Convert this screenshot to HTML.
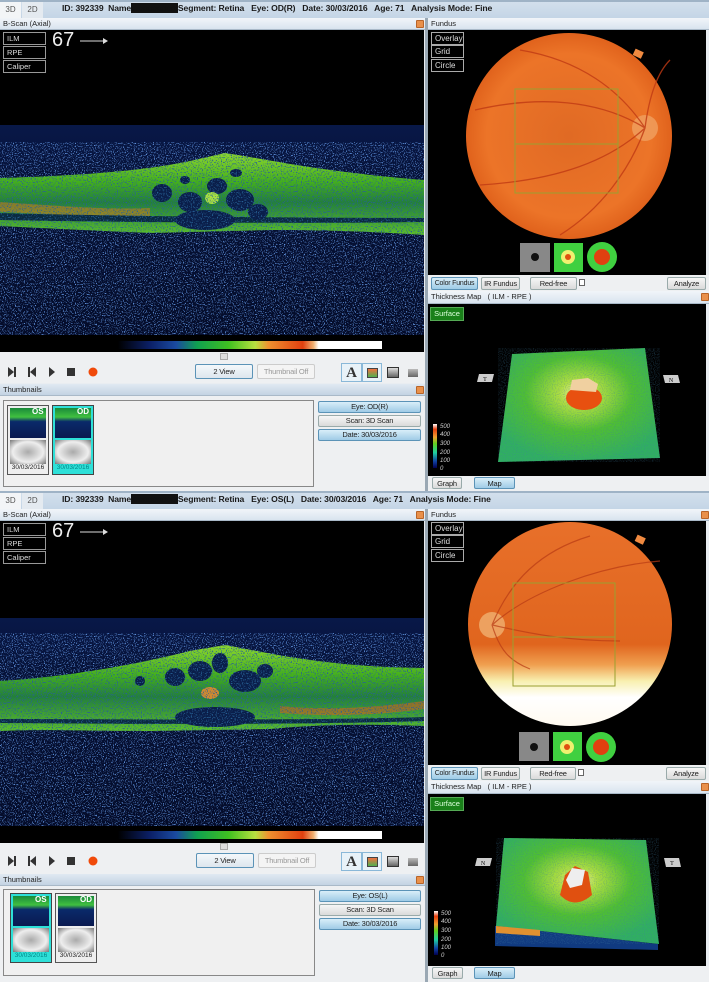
<!DOCTYPE html>
<html><head><meta charset="utf-8">
<style>
*{margin:0;padding:0;box-sizing:border-box}
body{width:709px;height:982px;overflow:hidden;background:#fff;font-family:"Liberation Sans",sans-serif;position:relative}
.half{position:absolute;left:0;width:709px;height:491px;background:#e9edf1;overflow:hidden}
.a{position:absolute}
.topbar{left:0;top:0;width:709px;height:18px;background:linear-gradient(#d2dfec,#c4d5e6);border-top:2px solid #9fb3c6}
.tab{top:2px;height:16px;width:21px;font-size:8px;color:#555;text-align:center;line-height:16px;background:#f3f5f7}
.info{left:62px;top:3px;font-size:8.6px;font-weight:bold;color:#1a1a1a;letter-spacing:-0.1px;white-space:nowrap}
.ph{height:12px;background:linear-gradient(#f1f5f9,#d9e4ef);font-size:7.5px;color:#222;line-height:12px;padding-left:3px;border-bottom:1px solid #a9b9c8;white-space:nowrap}
.orb{width:8px;height:8px;background:#e9904a;border:1px solid #b86428;border-radius:1px}
.lb{left:3px;width:43px;height:13px;border:1px solid #999;color:#ddd;font-size:7.5px;line-height:11px;padding-left:3px}
.rb{left:431px;width:33px;height:13px;border:1px solid #aaa;color:#ddd;font-size:8px;line-height:11px;padding-left:3px}
.btn{height:13px;border:1px solid #9aa;background:linear-gradient(#f6f6f6,#dadada);font-size:7.5px;text-align:center;line-height:11px;color:#222;border-radius:2px;white-space:nowrap;overflow:hidden;letter-spacing:-0.2px}
.btnb{background:linear-gradient(#d9eef9,#9fcbe6);border-color:#5b93b7}
.tb{background:#eef0f2}
</style></head><body>

<svg width="0" height="0" style="position:absolute">
<defs>
<filter id="spk" x="0" y="0" width="100%" height="100%"><feTurbulence type="fractalNoise" baseFrequency="0.9" numOctaves="1" seed="3"/><feColorMatrix type="matrix" values="0 0 0 0 0.12  0 0 0 0 0.3  0 0 0 0 0.75  0 0 0 7 -3.9"/></filter>
<filter id="spd" x="0" y="0" width="100%" height="100%"><feTurbulence type="fractalNoise" baseFrequency="0.8" numOctaves="1" seed="11"/><feColorMatrix type="matrix" values="0 0 0 0 0.02  0 0 0 0 0.12  0 0 0 0 0.3  0 0 0 6 -3.2"/></filter>
<filter id="spg" x="0" y="0" width="100%" height="100%"><feTurbulence type="fractalNoise" baseFrequency="0.9" numOctaves="1" seed="7"/><feColorMatrix type="matrix" values="0 0 0 0 0.05  0 0 0 0 0.2  0 0 0 0 0.35  0 0 0 4 -1.8"/></filter>
<linearGradient id="cbar" x1="0" x2="1"><stop offset="0" stop-color="#000"/><stop offset="0.12" stop-color="#0b1f66"/><stop offset="0.22" stop-color="#1a4aa0"/><stop offset="0.3" stop-color="#10a050"/><stop offset="0.42" stop-color="#40c020"/><stop offset="0.52" stop-color="#b8e040"/><stop offset="0.57" stop-color="#f09030"/><stop offset="0.7" stop-color="#e04010"/><stop offset="0.74" stop-color="#f0b070"/><stop offset="0.76" stop-color="#fff"/><stop offset="1" stop-color="#fff"/></linearGradient>
<linearGradient id="bg1" x1="0" y1="0" x2="0" y2="1"><stop offset="0" stop-color="#081848"/><stop offset="0.25" stop-color="#061238"/><stop offset="1" stop-color="#040c2a"/></linearGradient>
<linearGradient id="ret" x1="0" y1="0" x2="0" y2="1"><stop offset="0" stop-color="#8ed82c"/><stop offset="0.35" stop-color="#44b01c"/><stop offset="0.6" stop-color="#23803a"/><stop offset="1" stop-color="#5cc02a"/></linearGradient>
<radialGradient id="fund" cx="0.5" cy="0.5" r="0.5"><stop offset="0" stop-color="#e06a24"/><stop offset="0.8" stop-color="#ec7428"/><stop offset="1" stop-color="#e0621c"/></radialGradient>
<linearGradient id="fund2" x1="0" y1="0" x2="0" y2="1"><stop offset="0" stop-color="#e8702a"/><stop offset="0.6" stop-color="#e0651e"/><stop offset="0.7" stop-color="#f0a050"/><stop offset="0.78" stop-color="#f8f0b0"/><stop offset="0.86" stop-color="#fff"/><stop offset="1" stop-color="#fffaf0"/></linearGradient>
<linearGradient id="leg" x1="0" y1="0" x2="0" y2="1"><stop offset="0" stop-color="#fff"/><stop offset="0.12" stop-color="#e84010"/><stop offset="0.3" stop-color="#f0a030"/><stop offset="0.45" stop-color="#60d020"/><stop offset="0.65" stop-color="#20d0a0"/><stop offset="0.85" stop-color="#1040a0"/><stop offset="1" stop-color="#000050"/></linearGradient>
<radialGradient id="surf1" cx="0.5" cy="0.4" r="0.6"><stop offset="0" stop-color="#f0f0a0"/><stop offset="0.2" stop-color="#b0e040"/><stop offset="0.55" stop-color="#50c030"/><stop offset="1" stop-color="#30b060"/></radialGradient>
<clipPath id="cr1"><path d="M0,148 C80,146 150,140 190,131 L225,123 C260,128 320,142 424,150 L424,205 C350,200 300,200 270,200 L150,203 C80,200 40,198 0,196Z"/></clipPath>
<clipPath id="cr2"><path d="M0,160 C80,155 150,140 190,130 L225,124 C260,130 320,146 424,147 L424,205 C350,202 300,205 270,208 L150,210 C80,210 40,208 0,210Z"/></clipPath>
</defs></svg>

<!-- ================= HALF 1 ================= -->
<div class="half" style="top:0">
 <div class="a topbar"></div>
 <div class="a tab" style="left:0">3D</div><div class="a tab" style="left:22px;background:#e4eaf0">2D</div>
 <div class="a info">ID: 392339&nbsp; Name<span style="background:#111;color:#111">xxxxxxxxxx</span>Segment: Retina&nbsp;&nbsp; Eye: OD(R)&nbsp;&nbsp; Date: 30/03/2016&nbsp;&nbsp; Age: 71&nbsp;&nbsp; Analysis Mode: Fine</div>
 <div class="a ph" style="left:0;top:18px;width:425px">B-Scan (Axial)</div><div class="a orb" style="left:416px;top:20px"></div>
 <div class="a ph" style="left:428px;top:18px;width:281px">Fundus</div>
 <div class="a" style="left:425px;top:18px;width:3px;height:473px;background:#9aa8b4"></div>
 <svg class="a" style="left:0;top:30px" width="424" height="322" viewBox="0 0 424 322">
  <rect width="424" height="322" fill="#000"/>
  <rect y="95" width="424" height="210" fill="url(#bg1)"/>
  <rect y="112" width="424" height="193" filter="url(#spk)"/>
  <path d="M0,148 C80,146 150,140 190,131 L225,123 C260,128 320,142 424,150 L424,205 C350,200 300,200 270,200 L150,203 C80,200 40,198 0,196Z" fill="url(#ret)"/>
  <path d="M0,172 C60,176 110,180 150,178 L150,186 C100,188 50,184 0,182Z" fill="#c87a20" opacity="0.6"/>
  <path d="M0,183 C100,186 300,188 424,188 L424,192 C300,194 100,192 0,190Z" fill="#0a2a40"/>
  <g fill="#0a1e4a"><ellipse cx="162" cy="163" rx="10" ry="9"/><ellipse cx="190" cy="172" rx="12" ry="10"/><ellipse cx="217" cy="156" rx="10" ry="8"/><ellipse cx="240" cy="170" rx="14" ry="11"/><ellipse cx="258" cy="182" rx="10" ry="8"/><ellipse cx="205" cy="190" rx="30" ry="10"/><ellipse cx="236" cy="143" rx="6" ry="4"/><ellipse cx="185" cy="150" rx="5" ry="4"/></g>
  <ellipse cx="212" cy="168" rx="7" ry="6" fill="#a8e040"/>
  <rect y="110" width="424" height="110" filter="url(#spd)" clip-path="url(#cr1)"/>
  <rect x="118" y="311" width="264" height="8" fill="url(#cbar)"/>
 </svg>
 <div class="a lb" style="top:32px">ILM</div><div class="a lb" style="top:46px">RPE</div><div class="a lb" style="top:60px">Caliper</div>
 <div class="a" style="left:52px;top:29px;color:#eee;font-size:20px">67</div>
 <svg class="a" style="left:80px;top:37px" width="30" height="8"><line x1="0" y1="4" x2="24" y2="4" stroke="#ddd"/><path d="M23,1 L28,4 L23,7Z" fill="#ddd"/></svg>
 <div class="a tb" style="left:0;top:352px;width:425px;height:31px"></div>
 <div class="a" style="left:220px;top:353px;width:8px;height:7px;background:#ddd;border:1px solid #aaa"></div>
 <svg class="a" style="left:0;top:364px" width="110" height="16"><g fill="#333"><path d="M8,3 L14,8 L8,13Z"/><rect x="14" y="3" width="2" height="10"/><rect x="28" y="3" width="2" height="10"/><path d="M36,3 L30,8 L36,13Z"/><path d="M49,3 L55,8 L49,13Z"/><rect x="67" y="4" width="8" height="8"/></g><circle cx="93" cy="8" r="4.5" fill="#f04a0a"/></svg>
 <div class="a btn btnb" style="left:195px;top:364px;width:58px;height:15px;line-height:13px;background:linear-gradient(#f4f8fb,#dde6ee)">2 View</div>
 <div class="a btn" style="left:257px;top:364px;width:58px;height:15px;line-height:13px;color:#999;background:#f4f4f4;border-color:#ccc">Thumbnail Off</div>
 <div class="a" style="left:341px;top:363px;width:21px;height:19px;border:1px solid #8ab8d8;background:#e8f2f8;font-family:'Liberation Serif',serif;font-weight:bold;font-size:15px;text-align:center;line-height:18px;color:#333">A</div>
 <div class="a" style="left:362px;top:363px;width:20px;height:19px;border:1px solid #8ab8d8;background:#e8f2f8"><div style="margin:4px 4px;width:11px;height:10px;background:linear-gradient(#f07040,#50b050);border:1px solid #444"></div></div>
 <div class="a" style="left:387px;top:367px;width:12px;height:11px;background:linear-gradient(#ddd,#666);border:1.5px solid #333"></div>
 <div class="a" style="left:408px;top:369px;width:10px;height:8px;background:linear-gradient(#bbb,#666)"></div>
 <div class="a ph" style="left:0;top:384px;width:425px;height:12px;background:linear-gradient(#e0e9f2,#c3d3e3)">Thumbnails</div><div class="a orb" style="left:416px;top:386px"></div>
 <div class="a" style="left:0;top:396px;width:425px;height:95px;background:#eef0f2"></div>
 <div class="a" style="left:3px;top:400px;width:311px;height:87px;border:1px solid #888;background:#f0f0f0"></div>
 <div class="a" style="left:7px;top:405px;width:42px;height:70px;border:1px solid #555;background:#eee">
  <div style="margin:2px;height:30px;background:linear-gradient(#1a8a3a 0,#40c040 30%,#0a2a6a 45%,#0a1a50)"></div>
  <div style="margin:0 2px;height:24px;background:radial-gradient(#aaa,#eee 60%,#777)"></div>
  <div style="font-size:6.5px;text-align:center;color:#222">30/03/2016</div>
  <div class="a" style="left:24px;top:1px;color:#fff;font-size:8px;font-weight:bold">OS</div></div>
 <div class="a" style="left:52px;top:405px;width:42px;height:70px;border:1px solid #444;background:#2ee0d8">
  <div style="margin:2px;height:30px;background:linear-gradient(#1a8a3a 0,#40c040 30%,#0a2a6a 45%,#0a1a50)"></div>
  <div style="margin:0 2px;height:24px;background:radial-gradient(#aaa,#eee 60%,#777)"></div>
  <div style="font-size:6.5px;text-align:center;color:#088">30/03/2016</div>
  <div class="a" style="left:24px;top:1px;color:#fff;font-size:8px;font-weight:bold">OD</div></div>
 <div class="a btn btnb" style="left:318px;top:401px;width:103px;height:12px;line-height:10px">Eye: OD(R)</div>
 <div class="a btn" style="left:318px;top:415px;width:103px;height:12px;line-height:10px">Scan: 3D Scan</div>
 <div class="a btn btnb" style="left:318px;top:429px;width:103px;height:12px;line-height:10px">Date: 30/03/2016</div>
 <!-- right -->
 <svg class="a" style="left:428px;top:30px" width="278" height="245" viewBox="428 30 278 245">
  <rect x="428" y="30" width="278" height="245" fill="#000"/>
  <circle cx="569" cy="136" r="103" fill="url(#fund)"/>
  <rect x="634" y="50" width="9" height="7" fill="#f08a40" transform="rotate(25 638 53)"/>
  <circle cx="645" cy="128" r="13" fill="#f0a060" opacity="0.8"/>
  <g fill="none" stroke="#c03a14" stroke-width="1.3" opacity="0.8"><path d="M645,128 C620,90 580,60 520,50"/><path d="M645,128 C630,170 600,210 560,235"/><path d="M645,128 C600,100 540,95 475,110"/><path d="M645,128 C610,160 560,180 480,185"/><path d="M645,128 C650,90 660,70 670,60"/></g>
  <g fill="none" stroke="#9aa030" stroke-width="1"><rect x="515" y="89" width="103" height="104"/><line x1="515" y1="144" x2="618" y2="144"/></g>
  <rect x="520" y="243" width="30" height="29" fill="#888"/><circle cx="535" cy="257" r="4" fill="#111"/>
  <rect x="554" y="243" width="29" height="29" fill="#40d040"/><circle cx="568" cy="257" r="7" fill="#f0f070"/><circle cx="568" cy="257" r="3" fill="#e05010"/>
  <circle cx="602" cy="257" r="15" fill="#40d040"/><circle cx="602" cy="257" r="8" fill="#e04010"/>
 </svg>
 <div class="a rb" style="top:32px">Overlay</div><div class="a rb" style="top:45px">Grid</div><div class="a rb" style="top:59px">Circle</div>
 <div class="a tb" style="left:428px;top:275px;width:281px;height:16px"></div>
 <div class="a btn btnb" style="left:431px;top:277px;width:47px;font-size:7px">Color Fundus</div>
 <div class="a btn" style="left:481px;top:277px;width:39px">IR Fundus</div>
 <div class="a btn" style="left:530px;top:277px;width:47px">Red-free</div>
 <div class="a" style="left:579px;top:279px;width:6px;height:7px;border:1px solid #666;background:#fff"></div>
 <div class="a btn" style="left:667px;top:277px;width:39px">Analyze</div>
 <div class="a ph" style="left:428px;top:291px;width:281px;height:13px">Thickness Map &nbsp; ( ILM - RPE )</div><div class="a orb" style="left:701px;top:293px"></div>
 <svg class="a" style="left:428px;top:304px" width="278" height="172" viewBox="428 304 278 172">
  <rect x="428" y="304" width="278" height="172" fill="#000"/>
  <polygon points="512,354 645,348 660,458 498,462" fill="url(#surf1)"/>
  <polygon points="512,354 645,348 660,458 498,462" filter="url(#spg)" opacity="0.3"/>
  <ellipse cx="584" cy="398" rx="18" ry="12" fill="#e85010"/>
  <path d="M570,390 L572,380 L588,378 L598,384 L596,392Z" fill="#f0d0a0"/>
  <polygon points="479,374 494,374 492,382 477,382" fill="#ccc"/><text x="485" y="381" font-size="6" font-family="Liberation Serif" text-anchor="middle">T</text>
  <polygon points="663,375 678,375 680,383 665,383" fill="#ccc"/><text x="671" y="382" font-size="6" font-family="Liberation Serif" text-anchor="middle">N</text>
  <rect x="433" y="424" width="4" height="44" fill="url(#leg)"/>
  <g font-size="6" fill="#ccc" font-style="italic" font-family="Liberation Sans"><text x="440" y="428">500</text><text x="440" y="436">400</text><text x="440" y="445">300</text><text x="440" y="454">200</text><text x="440" y="462">100</text><text x="440" y="470">0</text></g>
 </svg>
 <div class="a" style="left:430px;top:307px;width:34px;height:14px;background:#1a801a;border:1px solid #5a5;color:#dfd;font-size:7.5px;line-height:12px;text-align:center">Surface</div>
 <div class="a tb" style="left:428px;top:476px;width:281px;height:15px"></div>
 <div class="a btn" style="left:432px;top:477px;width:30px;height:12px">Graph</div>
 <div class="a btn btnb" style="left:474px;top:477px;width:41px;height:12px">Map</div>
</div>

<!-- ================= HALF 2 ================= -->
<div class="half" style="top:491px">
 <div class="a topbar"></div>
 <div class="a tab" style="left:0">3D</div><div class="a tab" style="left:22px;background:#e4eaf0">2D</div>
 <div class="a info">ID: 392339&nbsp; Name<span style="background:#111;color:#111">xxxxxxxxxx</span>Segment: Retina&nbsp;&nbsp; Eye: OS(L)&nbsp;&nbsp; Date: 30/03/2016&nbsp;&nbsp; Age: 71&nbsp;&nbsp; Analysis Mode: Fine</div>
 <div class="a ph" style="left:0;top:18px;width:425px">B-Scan (Axial)</div><div class="a orb" style="left:416px;top:20px"></div>
 <div class="a ph" style="left:428px;top:18px;width:281px">Fundus</div><div class="a orb" style="left:701px;top:20px"></div>
 <div class="a" style="left:425px;top:18px;width:3px;height:473px;background:#9aa8b4"></div>
 <svg class="a" style="left:0;top:30px" width="424" height="322" viewBox="0 0 424 322">
  <rect width="424" height="322" fill="#000"/>
  <rect y="97" width="424" height="208" fill="url(#bg1)"/>
  <rect y="112" width="424" height="193" filter="url(#spk)"/>
  <path d="M0,160 C80,155 150,140 190,130 L225,124 C260,130 320,146 424,147 L424,205 C350,202 300,205 270,208 L150,210 C80,210 40,208 0,210Z" fill="url(#ret)"/>
  <path d="M280,185 C330,190 380,186 424,180 L424,188 C380,194 330,196 280,192Z" fill="#d06020" opacity="0.6"/>
  <path d="M0,198 C100,198 300,200 424,196 L424,200 C300,204 100,203 0,202Z" fill="#0a2a40"/>
  <g fill="#0a1e4a"><ellipse cx="175" cy="156" rx="10" ry="9"/><ellipse cx="200" cy="150" rx="12" ry="10"/><ellipse cx="220" cy="142" rx="8" ry="10"/><ellipse cx="245" cy="160" rx="16" ry="11"/><ellipse cx="265" cy="150" rx="8" ry="7"/><ellipse cx="215" cy="196" rx="40" ry="10"/><ellipse cx="140" cy="160" rx="5" ry="5"/></g>
  <ellipse cx="210" cy="172" rx="9" ry="6" fill="#d08a30"/>
  <rect y="110" width="424" height="110" filter="url(#spd)" clip-path="url(#cr2)"/>
  <rect x="118" y="310" width="264" height="8" fill="url(#cbar)"/>
 </svg>
 <div class="a lb" style="top:32px">ILM</div><div class="a lb" style="top:46px">RPE</div><div class="a lb" style="top:60px">Caliper</div>
 <div class="a" style="left:52px;top:29px;color:#eee;font-size:20px">67</div>
 <svg class="a" style="left:80px;top:37px" width="30" height="8"><line x1="0" y1="4" x2="24" y2="4" stroke="#ddd"/><path d="M23,1 L28,4 L23,7Z" fill="#ddd"/></svg>
 <div class="a tb" style="left:0;top:352px;width:425px;height:31px"></div>
 <div class="a" style="left:220px;top:352px;width:8px;height:7px;background:#ddd;border:1px solid #aaa"></div>
 <svg class="a" style="left:0;top:362px" width="110" height="16"><g fill="#333"><path d="M8,3 L14,8 L8,13Z"/><rect x="14" y="3" width="2" height="10"/><rect x="28" y="3" width="2" height="10"/><path d="M36,3 L30,8 L36,13Z"/><path d="M49,3 L55,8 L49,13Z"/><rect x="67" y="4" width="8" height="8"/></g><circle cx="93" cy="8" r="4.5" fill="#f04a0a"/></svg>
 <div class="a btn btnb" style="left:196px;top:362px;width:58px;height:15px;line-height:13px;background:linear-gradient(#f4f8fb,#dde6ee)">2 View</div>
 <div class="a btn" style="left:258px;top:362px;width:58px;height:15px;line-height:13px;color:#999;background:#f4f4f4;border-color:#ccc">Thumbnail Off</div>
 <div class="a" style="left:341px;top:361px;width:21px;height:19px;border:1px solid #8ab8d8;background:#e8f2f8;font-family:'Liberation Serif',serif;font-weight:bold;font-size:15px;text-align:center;line-height:18px;color:#333">A</div>
 <div class="a" style="left:362px;top:361px;width:20px;height:19px;border:1px solid #8ab8d8;background:#e8f2f8"><div style="margin:4px 4px;width:11px;height:10px;background:linear-gradient(#f07040,#50b050);border:1px solid #444"></div></div>
 <div class="a" style="left:387px;top:365px;width:12px;height:11px;background:linear-gradient(#ddd,#666);border:1.5px solid #333"></div>
 <div class="a" style="left:408px;top:367px;width:10px;height:8px;background:linear-gradient(#bbb,#666)"></div>
 <div class="a ph" style="left:0;top:383px;width:425px;height:12px;background:linear-gradient(#e0e9f2,#c3d3e3)">Thumbnails</div><div class="a orb" style="left:416px;top:385px"></div>
 <div class="a" style="left:0;top:395px;width:425px;height:96px;background:#eef0f2"></div>
 <div class="a" style="left:3px;top:398px;width:312px;height:87px;border:1px solid #888;background:#f0f0f0"></div>
 <div class="a" style="left:10px;top:402px;width:42px;height:70px;border:1px solid #444;background:#2ee0d8">
  <div style="margin:2px;height:30px;background:linear-gradient(#1a8a3a 0,#40c040 30%,#0a2a6a 45%,#0a1a50)"></div>
  <div style="margin:0 2px;height:24px;background:radial-gradient(#aaa,#eee 60%,#777)"></div>
  <div style="font-size:6.5px;text-align:center;color:#088">30/03/2016</div>
  <div class="a" style="left:24px;top:1px;color:#fff;font-size:8px;font-weight:bold">OS</div></div>
 <div class="a" style="left:55px;top:402px;width:42px;height:70px;border:1px solid #555;background:#eee">
  <div style="margin:2px;height:30px;background:linear-gradient(#1a8a3a 0,#40c040 30%,#0a2a6a 45%,#0a1a50)"></div>
  <div style="margin:0 2px;height:24px;background:radial-gradient(#aaa,#eee 60%,#777)"></div>
  <div style="font-size:6.5px;text-align:center;color:#222">30/03/2016</div>
  <div class="a" style="left:24px;top:1px;color:#fff;font-size:8px;font-weight:bold">OD</div></div>
 <div class="a btn btnb" style="left:319px;top:399px;width:102px;height:12px;line-height:10px">Eye: OS(L)</div>
 <div class="a btn" style="left:319px;top:413px;width:102px;height:12px;line-height:10px">Scan: 3D Scan</div>
 <div class="a btn btnb" style="left:319px;top:427px;width:102px;height:12px;line-height:10px">Date: 30/03/2016</div>
 <!-- right -->
 <svg class="a" style="left:428px;top:30px" width="278" height="245" viewBox="428 30 278 245">
  <rect x="428" y="30" width="278" height="245" fill="#000"/>
  <circle cx="570" cy="133" r="102" fill="url(#fund2)"/>
  <rect x="636" y="45" width="9" height="7" fill="#f08a40" transform="rotate(25 640 48)"/>
  <circle cx="492" cy="134" r="13" fill="#f0b070" opacity="0.8"/>
  <g fill="none" stroke="#b83a14" stroke-width="1.2" opacity="0.7"><path d="M492,134 C510,90 540,60 590,45"/><path d="M492,134 C530,100 600,75 660,70"/><path d="M492,134 C520,140 560,150 620,150"/><path d="M492,134 C500,160 510,170 530,178"/></g>
  <g fill="none" stroke="#9aa030" stroke-width="1"><rect x="513" y="92" width="102" height="103"/><line x1="513" y1="146" x2="615" y2="146"/></g>
  <rect x="519" y="241" width="30" height="29" fill="#888"/><circle cx="534" cy="256" r="4" fill="#111"/>
  <rect x="553" y="241" width="29" height="29" fill="#40d040"/><circle cx="567" cy="256" r="7" fill="#f0f070"/><circle cx="567" cy="256" r="3" fill="#e05010"/>
  <circle cx="601" cy="256" r="15" fill="#40d040"/><circle cx="601" cy="256" r="8" fill="#e04010"/>
 </svg>
 <div class="a rb" style="top:31px">Overlay</div><div class="a rb" style="top:44px">Grid</div><div class="a rb" style="top:58px">Circle</div>
 <div class="a tb" style="left:428px;top:274px;width:281px;height:16px"></div>
 <div class="a btn btnb" style="left:431px;top:276px;width:47px;font-size:7px">Color Fundus</div>
 <div class="a btn" style="left:481px;top:276px;width:39px">IR Fundus</div>
 <div class="a btn" style="left:530px;top:276px;width:46px">Red-free</div>
 <div class="a" style="left:578px;top:278px;width:6px;height:7px;border:1px solid #666;background:#fff"></div>
 <div class="a btn" style="left:666px;top:276px;width:40px">Analyze</div>
 <div class="a ph" style="left:428px;top:290px;width:281px;height:13px">Thickness Map &nbsp; ( ILM - RPE )</div><div class="a orb" style="left:701px;top:292px"></div>
 <svg class="a" style="left:428px;top:303px" width="278" height="172" viewBox="428 794 278 172">
  <rect x="428" y="794" width="278" height="172" fill="#000"/>
  <polygon points="495,926 658,944 658,950 495,946" fill="#103a80"/>
  <polygon points="504,838 646,840 659,944 496,926" fill="url(#surf1)"/>
  <polygon points="504,838 646,840 659,944 496,926" filter="url(#spg)" opacity="0.3"/>
  <polygon points="496,926 540,930 540,936 496,933" fill="#e09030"/>
  <path d="M560,895 L565,875 L575,866 L588,872 L592,895 C580,905 570,905 560,895Z" fill="#e05010"/>
  <path d="M566,880 L572,868 L585,870 L582,885 L570,888Z" fill="#eee"/>
  <polygon points="477,858 492,858 490,866 475,866" fill="#ccc"/><text x="483" y="865" font-size="6" font-family="Liberation Serif" text-anchor="middle">N</text>
  <polygon points="664,858 679,858 681,867 666,867" fill="#ccc"/><text x="672" y="865" font-size="6" font-family="Liberation Serif" text-anchor="middle">T</text>
  <rect x="434" y="911" width="4" height="44" fill="url(#leg)"/>
  <g font-size="6" fill="#ccc" font-style="italic" font-family="Liberation Sans"><text x="441" y="915">500</text><text x="441" y="923">400</text><text x="441" y="932">300</text><text x="441" y="941">200</text><text x="441" y="949">100</text><text x="441" y="957">0</text></g>
 </svg>
 <div class="a" style="left:430px;top:306px;width:34px;height:14px;background:#1a801a;border:1px solid #5a5;color:#dfd;font-size:7.5px;line-height:12px;text-align:center">Surface</div>
 <div class="a tb" style="left:428px;top:475px;width:281px;height:16px"></div>
 <div class="a btn" style="left:432px;top:476px;width:31px;height:12px">Graph</div>
 <div class="a btn btnb" style="left:474px;top:476px;width:41px;height:12px">Map</div>
</div>
</body></html>
